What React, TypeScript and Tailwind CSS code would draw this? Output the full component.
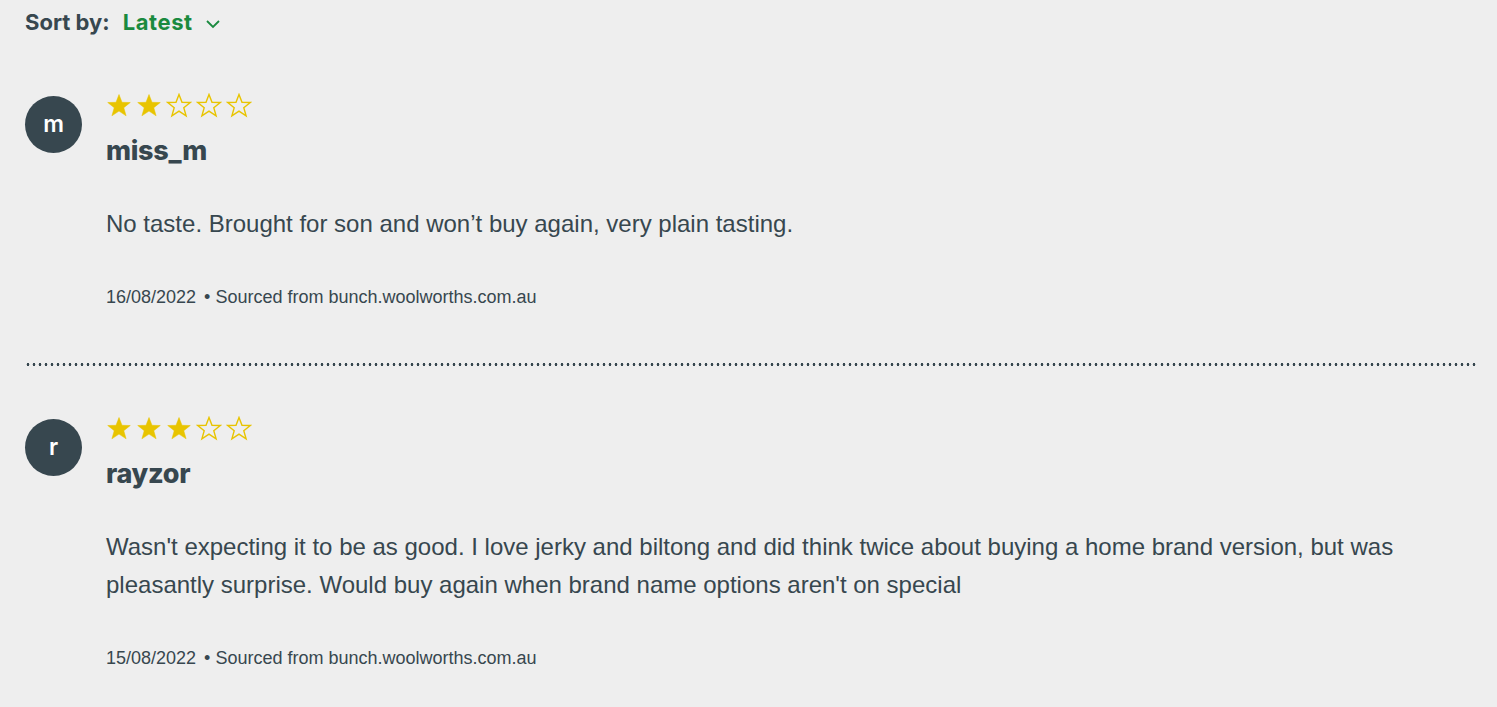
import React from "react";

const TEXT = "#37474f";

function Star({ filled }: { filled: boolean }) {
  return (
    <svg width="26" height="25" viewBox="0 0 26 25" className="block">
      <polygon
        points="13,1.5 16,9.3 24.3,9.5 17.8,14.7 20.1,22.8 13,18.1 5.9,22.8 8.2,14.7 1.7,9.5 10,9.3"
        fill={filled ? "#e8c400" : "none"}
        stroke="#e8c400"
        strokeWidth={filled ? 0.5 : 1.4}
        strokeLinejoin="miter"
      />
    </svg>
  );
}

function Stars({ n }: { n: number }) {
  return (
    <div className="flex gap-[4px] h-[24px] items-center">
      {[0, 1, 2, 3, 4].map((i) => (
        <Star key={i} filled={i < n} />
      ))}
    </div>
  );
}

function Review({
  letter,
  rating,
  name,
  body,
  date,
}: {
  letter: string;
  rating: number;
  name: string;
  body: React.ReactNode;
  date: string;
}) {
  return (
    <div className="flex gap-[24px]">
      <div
        className="w-[57px] h-[57px] rounded-full bg-[#37474f] text-white flex items-center justify-center shrink-0 mt-[3px] text-[23px] font-semibold"
        style={{ fontFamily: "Inter, sans-serif" }}
      >
        {letter}
      </div>
      <div className="flex flex-col">
        <Stars n={rating} />
        <div
          className="text-[27px] leading-[32px] font-extrabold mt-[18px] text-[#37474f]"
          style={{ fontFamily: "Inter, sans-serif", letterSpacing: "-0.3px" }}
        >
          {name}
        </div>
        <div
          className="text-[24px] leading-[38px] mt-[38px] text-[#37474f]"
          style={{ fontFamily: "'Liberation Sans', Arial, sans-serif" }}
        >
          {body}
        </div>
        <div
          className="text-[18px] leading-[24px] mt-[42px] text-[#37474f]"
          style={{ fontFamily: "'Liberation Sans', Arial, sans-serif" }}
        >
          {date}
          <span className="ml-[8px]">• Sourced from bunch.woolworths.com.au</span>
        </div>
      </div>
    </div>
  );
}

export default function App() {
  return (
    <div className="min-h-[707px] w-full bg-[#eeeeee] pl-[25px] pr-[21px] pt-[10px]" style={{ color: TEXT }}>
      <div className="flex items-center h-[24px]" style={{ fontFamily: "Inter, sans-serif" }}>
        <span className="text-[22px] font-bold text-[#37474f]">Sort by:</span>
        <span className="text-[22px] font-bold text-[#1a8a3f] ml-[13px] tracking-[0.6px]">Latest</span>
        <svg width="16" height="10" viewBox="0 0 16 10" className="ml-[12px] mt-[3px]">
          <polyline points="2,2 8,8 14,2" fill="none" stroke="#1a8a3f" strokeWidth="1.8" />
        </svg>
      </div>

      <div className="mt-[59px]">
        <Review
          letter="m"
          rating={2}
          name="miss_m"
          body="No taste. Brought for son and won’t buy again, very plain tasting."
          date="16/08/2022"
        />
      </div>

      <div className="mt-[54px] h-[3px] w-full bg-[radial-gradient(circle,#37474f_1.2px,transparent_1.6px)] bg-[length:6px_3px]" />

      <div className="mt-[50px]">
        <Review
          letter="r"
          rating={3}
          name="rayzor"
          body={
            <>
              Wasn't expecting it to be as good. I love jerky and biltong and did think twice about buying a home brand version, but was
              <br />
              pleasantly surprise. Would buy again when brand name options aren't on special
            </>
          }
          date="15/08/2022"
        />
      </div>
    </div>
  );
}
